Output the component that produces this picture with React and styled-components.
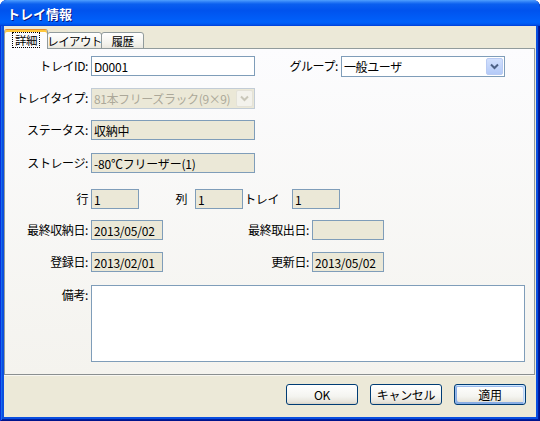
import React from 'react'
import styled, { createGlobalStyle } from 'styled-components'

const GlobalStyle = createGlobalStyle`
  html, body {
    margin: 0;
    padding: 0;
    background: #ffffff;
  }
  body {
    font-family: "Noto Sans CJK JP", "Liberation Sans", sans-serif;
    font-size: 12px;
    color: #000;
  }
`

const Chevron = ({ color }) => (
  <svg width="9" height="7" viewBox="0 0 9 7">
    <path d="M1 1.5 L4.5 5 L8 1.5" fill="none" stroke={color} strokeWidth="2" />
  </svg>
)

const App = () => {
  return (
    <>
      <GlobalStyle />
      <Window>
        <TitleBar>トレイ情報</TitleBar>
        <Client>
          <TabStrip>
            <Tab $w={44} $active>
              <Focus>詳細</Focus>
            </Tab>
            <Tab $w={55}>レイアウト</Tab>
            <Tab $w={43}>履歴</Tab>
          </TabStrip>
          <Panel>
            <Form>
              <Row>
                <Label $w={83}>トレイID:</Label>
                <Field $w={164} defaultValue="D0001" />
                <Label $w={83}>グループ:</Label>
                <Combo $w={164}>
                  <ComboText>一般ユーザ</ComboText>
                  <ComboButton>
                    <Chevron color="#4D6185" />
                  </ComboButton>
                </Combo>
              </Row>
              <Row $top={12}>
                <Label $w={83}>トレイタイプ:</Label>
                <Combo $w={164} $disabled>
                  <ComboText>81本フリーズラック(9×9)</ComboText>
                  <ComboButton $disabled>
                    <Chevron color="#C9C7BA" />
                  </ComboButton>
                </Combo>
              </Row>
              <Row $top={12}>
                <Label $w={83}>ステータス:</Label>
                <Field $w={164} $ro readOnly defaultValue="収納中" />
              </Row>
              <Row $top={13}>
                <Label $w={83}>ストレージ:</Label>
                <Field $w={164} $ro readOnly defaultValue="-80℃フリーザー(1)" />
              </Row>
              <Row $top={16}>
                <Label $w={83}>行</Label>
                <Field $w={48} $ro readOnly defaultValue="1" />
                <Label $w={48} $gap={8}>列</Label>
                <Field $w={48} $ro readOnly defaultValue="1" />
                <Label $w={36} $gap={13}>トレイ</Label>
                <Field $w={48} $ro readOnly defaultValue="1" />
              </Row>
              <Row $top={11}>
                <Label $w={83}>最終収納日:</Label>
                <Field $w={72} $ro readOnly defaultValue="2013/05/02" />
                <Label $w={146}>最終取出日:</Label>
                <Field $w={72} $ro readOnly defaultValue="" />
              </Row>
              <Row $top={12}>
                <Label $w={83}>登録日:</Label>
                <Field $w={72} $ro readOnly defaultValue="2013/02/01" />
                <Label $w={146}>更新日:</Label>
                <Field $w={72} $ro readOnly defaultValue="2013/05/02" />
              </Row>
              <Row $top={13} $tall>
                <Label $w={83}>備考:</Label>
                <Notes />
              </Row>
            </Form>
          </Panel>
          <Footer>
            <Button>OK</Button>
            <Button>キャンセル</Button>
            <Button $default>適用</Button>
          </Footer>
        </Client>
      </Window>
    </>
  )
}

export default App

const Window = styled.div`
  box-sizing: border-box;
  width: 540px;
  height: 421px;
  display: flex;
  flex-direction: column;
  background: #0A4FE0;
  border-radius: 7px 7px 0 0;
  overflow: hidden;
  box-shadow: inset 1px 0 #0831d9, inset -1px -1px #00138c, inset 2px 0 #166aee, inset -2px -2px #001ea0;
`

const TitleBar = styled.div`
  height: 26px;
  flex-shrink: 0;
  display: flex;
  align-items: center;
  padding-left: 7px;
  background: linear-gradient(180deg, #4FA0FF 0%, #2A7CF6 8%, #0A5FEF 16%, #0053EE 40%, #0061FB 85%, #0058F0 93%, #003DD7 100%);
  color: #ffffff;
  font-weight: bold;
  font-size: 13px;
  text-shadow: 1px 1px #0A1883;
`

const Client = styled.div`
  flex: 1;
  margin: 0 4px 4px 4px;
  padding-top: 3px;
  background: #ECE9D8;
  display: flex;
  flex-direction: column;
  min-height: 0;
`

const TabStrip = styled.div`
  position: relative;
  z-index: 1;
  height: 20px;
  margin-bottom: -1px;
  display: flex;
  align-items: flex-end;
`

const Tab = styled.div`
  box-sizing: border-box;
  width: ${p => p.$w}px;
  height: ${p => (p.$active ? 20 : 17)}px;
  margin-left: ${p => (p.$active ? 0 : -1)}px;
  border: 1px solid #919B9C;
  border-bottom: ${p => (p.$active ? 'none' : '1px solid #919B9C')};
  border-top-color: ${p => (p.$active ? '#E68B2C' : '#919B9C')};
  border-radius: 3px 3px 0 0;
  background: ${p => (p.$active ? '#FCFCFE' : 'linear-gradient(180deg, #FFFFFF, #F3F2EC 70%, #E9E7DE)')};
  box-shadow: ${p => (p.$active ? 'inset 0 2px #FFC83C' : 'none')};
  display: flex;
  align-items: center;
  justify-content: center;
  padding-top: ${p => (p.$active ? 1 : 0)}px;
  font-size: 11.5px;
  letter-spacing: -0.6px;
  line-height: 14px;
  white-space: nowrap;
`

const Focus = styled.span`
  outline: 1px dotted #000;
  padding: 0 2px;
`

const Panel = styled.div`
  flex: 1;
  margin-right: 1px;
  border: 1px solid #919B9C;
  border-bottom-color: #8A8F90;
  background: linear-gradient(180deg, #FCFCFE, #F4F3EE);
  box-shadow: 0 1px #F8F7F2;
  min-height: 0;
`

const Form = styled.div`
  display: flex;
  flex-direction: column;
  padding-top: 7px;
`

const Row = styled.div`
  display: flex;
  align-items: ${p => (p.$tall ? 'flex-start' : 'center')};
  height: ${p => (p.$tall ? 'auto' : '20px')};
  margin-top: ${p => p.$top || 0}px;
`

const Label = styled.div`
  box-sizing: border-box;
  flex-shrink: 0;
  width: ${p => p.$w}px;
  margin-right: ${p => (p.$gap === undefined ? 3 : p.$gap)}px;
  text-align: right;
  white-space: nowrap;
  line-height: 20px;
  font-size: 12px;
  letter-spacing: -0.4px;
`

const Field = styled.input`
  box-sizing: border-box;
  flex-shrink: 0;
  width: ${p => p.$w}px;
  height: 20px;
  margin: 0;
  padding: 0 2px;
  border: 1px solid #7F9DB9;
  border-radius: 0;
  background: ${p => (p.$ro ? '#EBE8D7' : '#FFFFFF')};
  color: #000;
  font-family: inherit;
  font-size: 12px;
  letter-spacing: -0.2px;
  outline: none;
`

const Combo = styled.div`
  box-sizing: border-box;
  flex-shrink: 0;
  width: ${p => p.$w}px;
  height: 21px;
  display: flex;
  align-items: center;
  padding: 1px;
  border: 1px solid ${p => (p.$disabled ? '#C2CCD6' : '#7F9DB9')};
  background: ${p => (p.$disabled ? '#EBE8D7' : '#FFFFFF')};
  color: ${p => (p.$disabled ? '#ACA899' : '#000000')};
`

const ComboText = styled.div`
  flex: 1;
  padding-left: 1px;
  white-space: nowrap;
  overflow: hidden;
  font-size: 12px;
  letter-spacing: -0.4px;
`

const ComboButton = styled.div`
  box-sizing: border-box;
  flex-shrink: 0;
  width: 17px;
  height: 17px;
  display: flex;
  align-items: center;
  justify-content: center;
  border-radius: 2px;
  border: 1px solid ${p => (p.$disabled ? '#E4E2D8' : '#B9CBF3')};
  background: ${p => (p.$disabled ? '#F3F2EC' : 'linear-gradient(180deg, #D2E0FD, #B4CAF8)')};
`

const Notes = styled.textarea`
  box-sizing: border-box;
  width: 434px;
  height: 77px;
  margin: 0;
  border: 1px solid #7F9DB9;
  background: #FFFFFF;
  resize: none;
  font-family: inherit;
  font-size: 12px;
  outline: none;
  overflow: hidden;
`

const Footer = styled.div`
  height: 42px;
  flex-shrink: 0;
  box-sizing: border-box;
  display: flex;
  justify-content: flex-end;
  align-items: flex-start;
  gap: 12px;
  padding: 9px 10px 0 0;
`

const Button = styled.button`
  box-sizing: border-box;
  width: 72px;
  height: 21px;
  margin: 0;
  padding: 0;
  border: 1px solid #003C74;
  border-radius: 3px;
  background: linear-gradient(180deg, #FFFFFF, #F4F4F0 60%, #E6E3DA 90%, #D6D0C5);
  color: #000;
  font-family: inherit;
  font-size: 12px;
  letter-spacing: -0.3px;
  line-height: 18px;
  box-shadow: ${p =>
    p.$default
      ? 'inset -1px 1px #cee7ff, inset 1px 2px #98b8ea, inset -2px 2px #bcd4f6, inset 1px -1px #89ade4, inset 2px -2px #89ade4'
      : 'none'};
`
